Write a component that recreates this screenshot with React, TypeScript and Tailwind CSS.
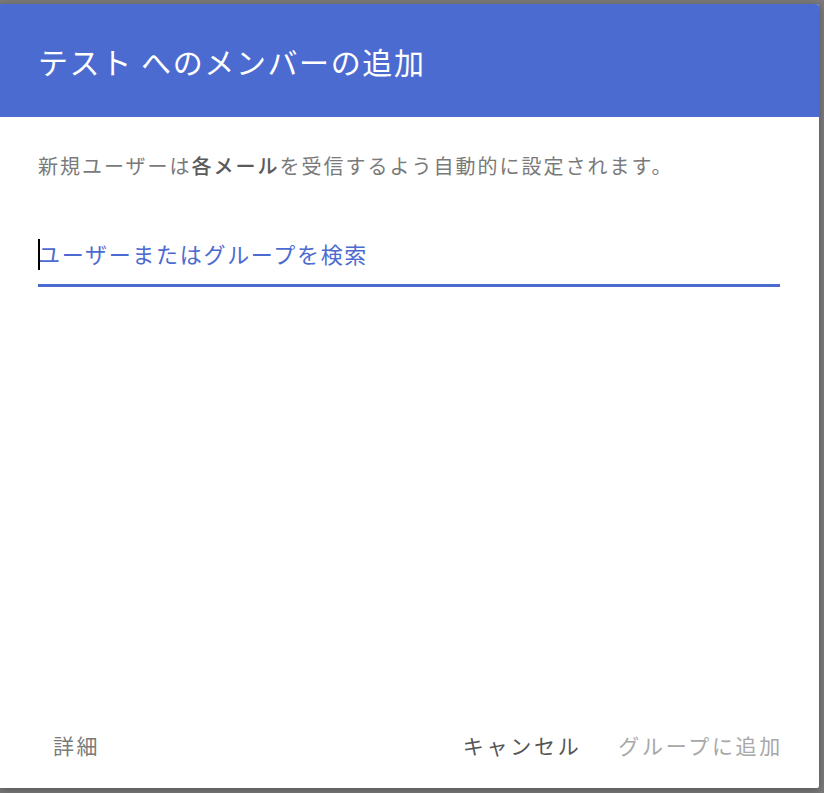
import React from "react"

const jp = "font-['Noto_Sans_CJK_JP','Noto_Sans',sans-serif]"

export default function App() {
  return (
    <div className={`min-h-[793px] w-full bg-[#7a7a7a] pt-[4px] ${jp}`}>
      <div className="flex h-[784px] w-[819px] flex-col overflow-hidden rounded-tr-[3px] rounded-br-[2px] bg-white shadow-[0_2px_8px_rgba(0,0,0,0.3)]">
        <header className="flex h-[113px] shrink-0 items-center bg-[#4c6bd0] pl-[38px]">
          <h1 className="text-[30px] leading-none tracking-[1.6px] text-white">テスト へのメンバーの追加</h1>
        </header>

        <div className="flex flex-1 flex-col px-[38px] pt-[35px]">
          <p className="text-[20px] leading-[28px] tracking-[2px] text-[#7a7a7a]">
            新規ユーザーは<span className="font-medium text-[#5a5a5a]">各メール</span>を受信するよう自動的に設定されます。
          </p>

          <div className="relative mr-[1px] mt-[53px] border-b-[3px] border-[#4c6bd0] pb-[11px]">
            <span className="absolute left-0 top-[6px] h-[31px] w-[2px] bg-black" />
            <input
              type="text"
              placeholder="ユーザーまたはグループを検索"
              className="w-full bg-transparent text-[22px] leading-[40px] tracking-[1.7px] text-[#333] outline-none placeholder:text-[#4c6bd0]"
            />
          </div>
        </div>

        <footer className="flex h-[82px] shrink-0 items-center justify-between pl-[53px] pr-[36px] pb-[2px]">
          <button className="text-[21px] tracking-[2.5px] text-[#7a7a7a]">詳細</button>
          <div className="flex items-center gap-[37px]">
            <button className="text-[21px] tracking-[2.7px] text-[#555]">キャンセル</button>
            <button className="text-[21px] tracking-[2.7px] text-[#a8a8a8]" disabled>
              グループに追加
            </button>
          </div>
        </footer>
      </div>
    </div>
  )
}
